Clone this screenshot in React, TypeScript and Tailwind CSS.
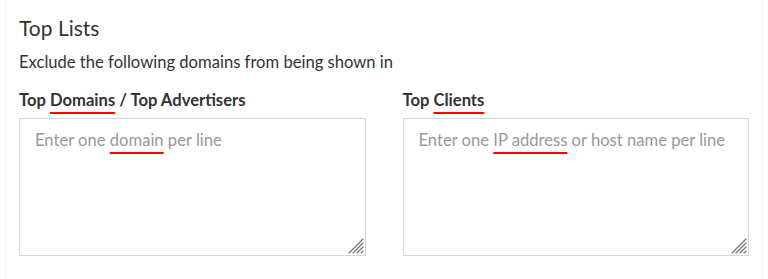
import React, { useState } from 'react';

const mark = 'underline decoration-[#ff0000] decoration-2 underline-offset-[6px]';

function Grip() {
  return (
    <svg className="pointer-events-none absolute right-[2px] bottom-[2px]" width="17" height="17" viewBox="0 0 17 17">
      <g stroke="#6f6f6f" strokeWidth="1.1" strokeLinecap="round">
        <line x1="2" y1="16" x2="16" y2="2" />
        <line x1="6" y1="16" x2="16" y2="6" />
        <line x1="10" y1="16" x2="16" y2="10" />
        <line x1="14" y1="16" x2="16" y2="14" />
      </g>
    </svg>
  );
}

function ListBox({ label, hint }: { label: React.ReactNode; hint: React.ReactNode }) {
  const [value, setValue] = useState('');
  return (
    <div className="flex flex-col">
      <label className="text-[16.6px] leading-[24px] font-bold text-[#333] mb-[6px]">{label}</label>
      <div className="relative">
        <textarea
          value={value}
          onChange={(e) => setValue(e.target.value)}
          className="block w-full h-[138px] resize-none border border-[#d2d6de] bg-white px-[15px] py-[9px] text-[16.6px] leading-[24px] text-[#555] outline-none"
        />
        {!value && (
          <div className="pointer-events-none absolute left-[16px] top-[10px] text-[16.6px] leading-[24px] text-[#999]">
            {hint}
          </div>
        )}
        <Grip />
      </div>
    </div>
  );
}

export default function App() {
  return (
    <div className="min-h-screen bg-white px-[5px] font-['Source_Sans_Pro','Lato',sans-serif]">
      <div className="-mt-[5px] border border-[#f0f0f0] px-[13px] pt-[18px] pb-[30px]">
        <h3 className="text-[21px] leading-[28px] text-[#333]">Top Lists</h3>
        <p className="mt-[8px] text-[16.6px] leading-[24px] text-[#333]">Exclude the following domains from being shown in</p>
        <div className="mt-[14px] grid grid-cols-2 gap-x-[37px]">
          <ListBox
            label={
              <>
                Top <span className={mark}>Domains</span> / Top Advertisers
              </>
            }
            hint={
              <>
                Enter one <span className={mark}>domain</span> per line
              </>
            }
          />
          <ListBox
            label={
              <>
                Top <span className={mark}>Clients</span>
              </>
            }
            hint={
              <>
                Enter one <span className={mark}>IP address</span> or host name per line
              </>
            }
          />
        </div>
      </div>
    </div>
  );
}
